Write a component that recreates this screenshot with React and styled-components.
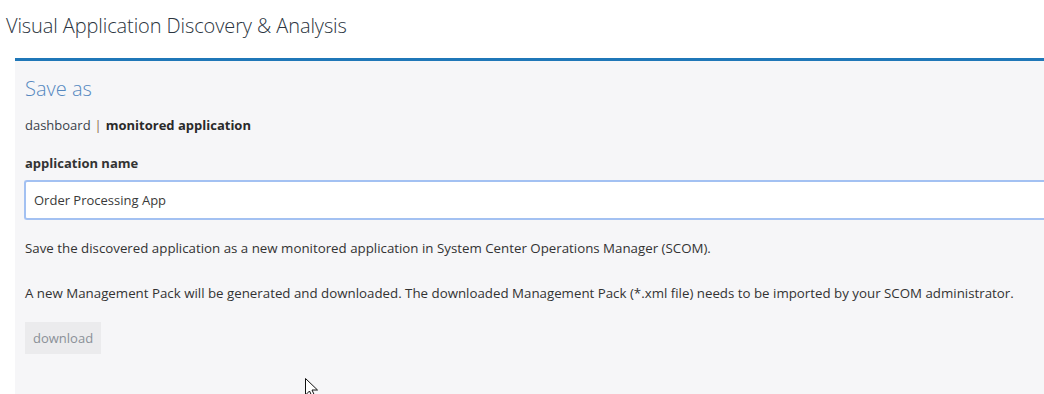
import React from "react";
import styled, { createGlobalStyle } from "styled-components";

const Global = createGlobalStyle`
  html, body { margin: 0; padding: 0; background: #ffffff; }
  body { font-family: "Open Sans", "Noto Sans", sans-serif; color: #333; overflow: hidden; }
  #root { height: 394px; }
`;

const Page = styled.div`
  height: 394px;
  display: flex;
  flex-direction: column;
  position: relative;
`;

const Title = styled.h1`
  margin: 0;
  padding: 13px 0 0 6px;
  height: 44px;
  box-sizing: border-box;
  font-size: 20px;
  font-weight: 300;
  color: #2b3440;
  letter-spacing: -0.1px;
  line-height: 26px;
`;

const Panel = styled.section`
  flex: 1;
  margin: 14px 0 0 15px;
  border-top: 3px solid #1f77b8;
  background: #f6f6f8;
  padding: 15px 0 0 10px;
  display: flex;
  flex-direction: column;
`;

const Heading = styled.h2`
  margin: 0;
  font-size: 20px;
  font-weight: 300;
  color: #5588c0;
  line-height: 26px;
`;

const ModeRow = styled.div`
  margin-top: 14px;
  font-size: 13px;
  line-height: 18px;
  color: #333;
  display: flex;
  gap: 4px;
  align-items: center;
`;

const Sep = styled.span`
  color: #8a6a4a;
`;

const Mode = styled.span`
  font-weight: ${(p) => (p.$active ? 700 : 400)};
  color: ${(p) => (p.$active ? "#2a2a2a" : "#3a3f4a")};
`;

const Label = styled.label`
  margin-top: 20px;
  font-size: 13px;
  font-weight: 700;
  color: #333;
  line-height: 18px;
`;

const Input = styled.input`
  margin: 8px 0 0 -1px;
  height: 40px;
  box-sizing: border-box;
  width: calc(100% + 20px);
  border: 2px solid #a3c1f2;
  border-right: none;
  border-radius: 3px 0 0 3px;
  background: #fff;
  padding: 0 8px;
  font-family: "Open Sans", "Noto Sans", sans-serif;
  font-size: 13px;
  color: #3a3a3a;
  outline: none;
`;

const Para = styled.p`
  margin: ${(p) => p.$mt || 0}px 0 0 0;
  font-size: 13.3px;
  line-height: 18px;
  color: #333;
  white-space: nowrap;
`;

const Button = styled.button`
  margin-top: 20px;
  align-self: flex-start;
  height: 32px;
  padding: 0 8px;
  border: none;
  background: #ebebed;
  color: #8a9097;
  font-family: "Open Sans", "Noto Sans", sans-serif;
  font-size: 13px;
  cursor: default;
`;

const Cursor = styled.svg`
  position: absolute;
  left: 305px;
  top: 378px;
`;

export default function App() {
  return (
    <>
      <Global />
      <Page>
        <Title>Visual Application Discovery &amp; Analysis</Title>
        <Panel>
          <Heading>Save as</Heading>
          <ModeRow>
            <Mode>dashboard</Mode>
            <Sep>|</Sep>
            <Mode $active>monitored application</Mode>
          </ModeRow>
          <Label>application name</Label>
          <Input defaultValue="Order Processing App" />
          <Para $mt={19}>
            Save the discovered application as a new monitored application in System Center Operations Manager (SCOM).
          </Para>
          <Para $mt={27}>
            A new Management Pack will be generated and downloaded. The downloaded Management Pack (*.xml file) needs to be imported by your SCOM administrator.
          </Para>
          <Button>download</Button>
        </Panel>
        <Cursor width="14" height="20" viewBox="0 0 14 20">
          <path d="M0.5 0.5 L0.5 17 L4.5 13 L7.5 19.5 L10 18.5 L7 12 L12.5 12 Z" fill="#fff" stroke="#111" strokeWidth="1" />
        </Cursor>
      </Page>
    </>
  );
}
